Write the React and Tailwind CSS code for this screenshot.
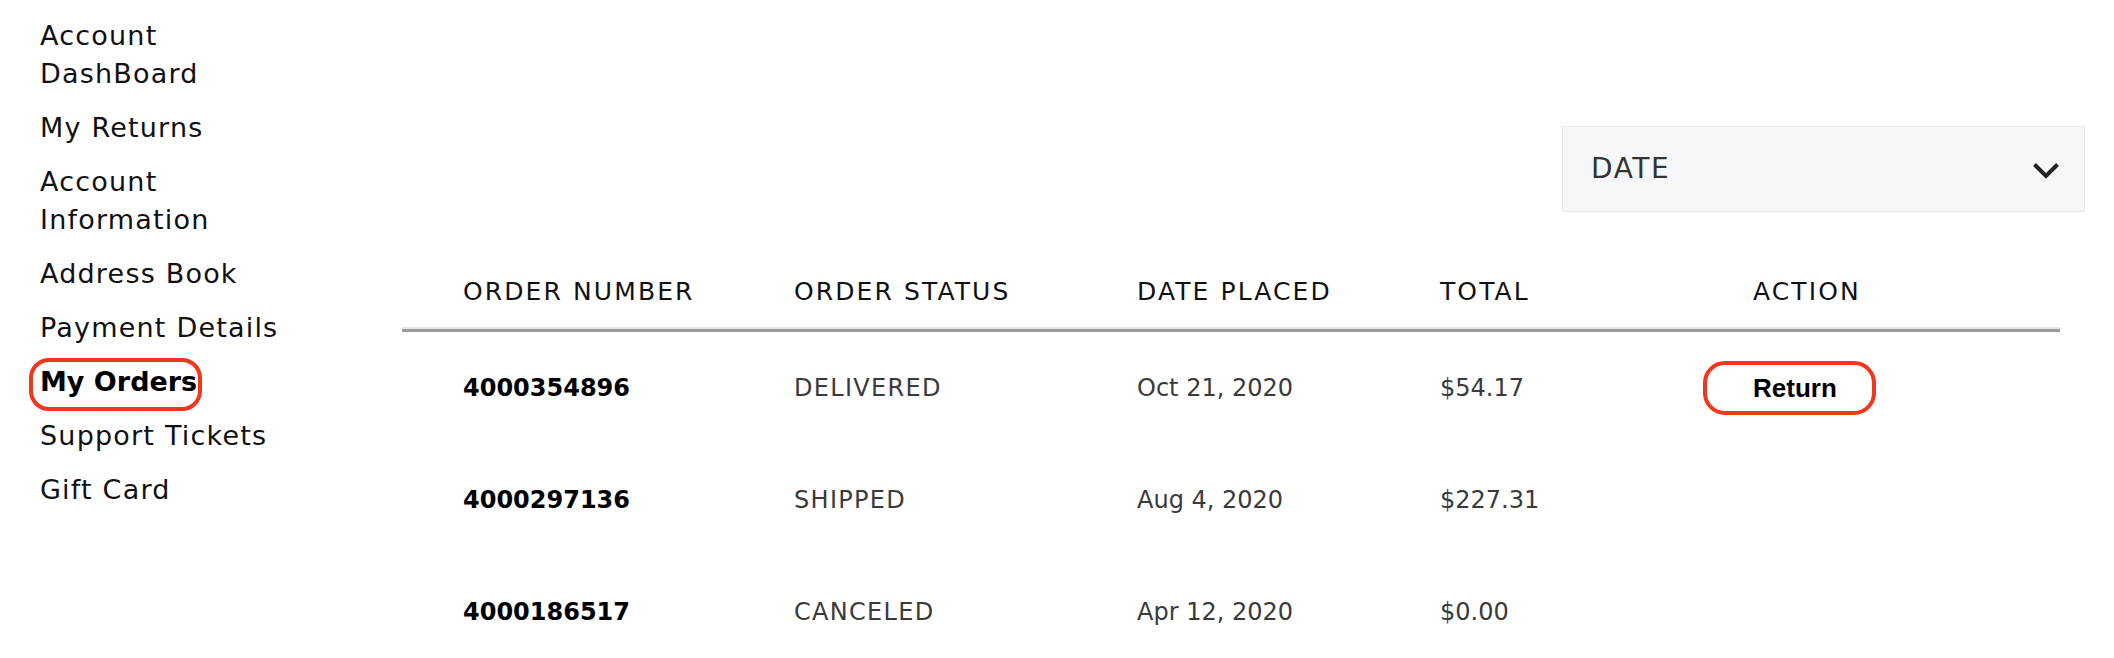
import { ChevronDown } from "lucide-react";

const navItems = [
  "Account DashBoard",
  "My Returns",
  "Account Information",
  "Address Book",
  "Payment Details",
  "My Orders",
  "Support Tickets",
  "Gift Card",
];

const orders = [
  { id: "4000354896", status: "DELIVERED", date: "Oct 21, 2020", total: "$54.17", canReturn: true },
  { id: "4000297136", status: "SHIPPED", date: "Aug 4, 2020", total: "$227.31" },
  { id: "4000186517", status: "CANCELED", date: "Apr 12, 2020", total: "$0.00" },
];

const cols = "grid grid-cols-[331px_343px_303px_260px_1fr] pl-[61px]";

// sidebar with account links
function Sidebar() {
  return (
    <aside className="w-[402px] shrink-0 pl-[40px] pt-[17px]">
      <ul className="w-[260px] flex flex-col gap-[16px] text-[27px] leading-[38px] tracking-[1.2px] text-[#111]">
        {navItems.map((item) =>
          item === "My Orders" ? (
            <li key={item} className="relative font-bold tracking-normal text-black">
              <span className="absolute left-[-11px] top-[-5px] w-[173px] h-[53px] rounded-[20px] border-[4px] border-[#f2361d]" />
              <span className="relative">{item}</span>
            </li>
          ) : (
            <li key={item}>{item}</li>
          )
        )}
      </ul>
    </aside>
  );
}

export default function App() {
  return (
    <div className="flex w-[2114px] h-[658px] overflow-hidden bg-white font-['DejaVu_Sans',sans-serif]">
      <Sidebar />
      <main className="flex-1 pr-[29px]">
        <div className="flex justify-end mt-[126px]">
          <div className="w-[523px] h-[86px] flex items-center justify-between pl-[28px] pr-[24px] bg-[#f6f7f9] border border-[#e9e9e9]">
            <span className="text-[28px] tracking-[1.6px] text-[#333]">DATE</span>
            <svg width="28" height="17" viewBox="0 0 28 17" className="mt-[2px]">
              <path d="M2.5 2.5 L14 14 L25.5 2.5" fill="none" stroke="#222" strokeWidth="4" />
            </svg>
          </div>
        </div>

        <div className="mr-[25px] mt-[50px]">
          <div className={`${cols} h-[65px] pb-[5px] items-center text-[25px] tracking-[2.1px] text-[#111]`}>
            <span>ORDER NUMBER</span>
            <span>ORDER STATUS</span>
            <span>DATE PLACED</span>
            <span>TOTAL</span>
            <span className="pl-[53px]">ACTION</span>
          </div>
          <div className="h-[2px] bg-[#e6e6e6]" />
          <div className="h-[3px] bg-[#9b9b9b]" />

          {orders.map((o) => (
            <div key={o.id} className={`${cols} h-[112px] items-center text-[24px] text-[#3a3a3a]`}>
              <span className="font-bold text-black">{o.id}</span>
              <span className="tracking-[1.3px]">{o.status}</span>
              <span>{o.date}</span>
              <span>{o.total}</span>
              <div>
                {o.canReturn && (
                  <button className="ml-[3px] w-[173px] h-[54px] rounded-[22px] border-[4px] border-[#f2361d] bg-white pl-[46px] text-left font-['Liberation_Sans',Arial,sans-serif] text-[26px] font-bold text-black">
                    Return
                  </button>
                )}
              </div>
            </div>
          ))}
        </div>
      </main>
    </div>
  );
}
